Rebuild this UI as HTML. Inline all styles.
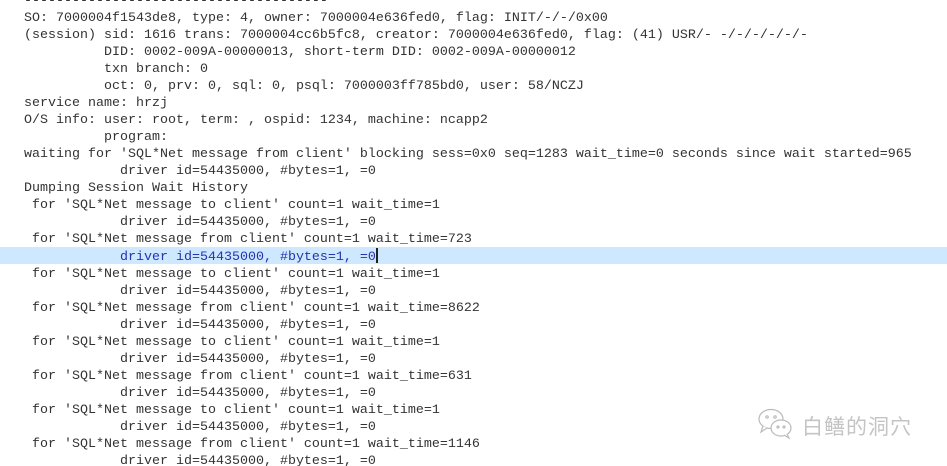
<!DOCTYPE html>
<html><head><meta charset="utf-8"><style>
html,body{margin:0;padding:0;background:#fff;width:947px;height:466px;overflow:hidden;position:relative}
pre{margin:0;position:absolute;left:24px;top:-7px;font-family:"Liberation Mono",monospace;font-size:13.33px;line-height:17px;color:#333}
.hl{position:absolute;left:0;top:247px;width:947px;height:17px;background:#cde8ff}
.b{color:#2433b0}
.cur{display:inline-block;width:2px;height:15px;background:#222;vertical-align:-3px}
.wm{position:absolute;left:802px;top:411px;font-family:"Noto Sans CJK SC",sans-serif;font-size:21px;color:#c4c4c4;letter-spacing:1px}
</style></head><body>
<div class="hl"></div>
<pre>--------------------------------------
SO: 7000004f1543de8, type: 4, owner: 7000004e636fed0, flag: INIT/-/-/0x00
(session) sid: 1616 trans: 7000004cc6b5fc8, creator: 7000004e636fed0, flag: (41) USR/- -/-/-/-/-/-
          DID: 0002-009A-00000013, short-term DID: 0002-009A-00000012
          txn branch: 0
          oct: 0, prv: 0, sql: 0, psql: 7000003ff785bd0, user: 58/NCZJ
service name: hrzj
O/S info: user: root, term: , ospid: 1234, machine: ncapp2
          program:
waiting for 'SQL*Net message from client' blocking sess=0x0 seq=1283 wait_time=0 seconds since wait started=965
            driver id=54435000, #bytes=1, =0
Dumping Session Wait History
 for 'SQL*Net message to client' count=1 wait_time=1
            driver id=54435000, #bytes=1, =0
 for 'SQL*Net message from client' count=1 wait_time=723
<span class="b">            driver id=54435000, #bytes=1, =0</span><span class="cur"></span>
 for 'SQL*Net message to client' count=1 wait_time=1
            driver id=54435000, #bytes=1, =0
 for 'SQL*Net message from client' count=1 wait_time=8622
            driver id=54435000, #bytes=1, =0
 for 'SQL*Net message to client' count=1 wait_time=1
            driver id=54435000, #bytes=1, =0
 for 'SQL*Net message from client' count=1 wait_time=631
            driver id=54435000, #bytes=1, =0
 for 'SQL*Net message to client' count=1 wait_time=1
            driver id=54435000, #bytes=1, =0
 for 'SQL*Net message from client' count=1 wait_time=1146
            driver id=54435000, #bytes=1, =0</pre>
<svg style="position:absolute;left:758px;top:408px" width="36" height="32" viewBox="0 0 36 32" fill="#fff" stroke="#bbb" stroke-width="1.2">
<ellipse cx="13" cy="11" rx="12" ry="9.5"/>
<path d="M5 18 L3 24 L9 20" />
<ellipse cx="23" cy="20" rx="10" ry="8"/>
<path d="M29 26 L31 30 L26 27"/>
<circle cx="9" cy="9" r="1.2"/><circle cx="17" cy="9" r="1.2"/>
<circle cx="20" cy="19" r="1"/><circle cx="26" cy="19" r="1"/>
</svg>
<div class="wm">白鳝的洞穴</div>
</body></html>
